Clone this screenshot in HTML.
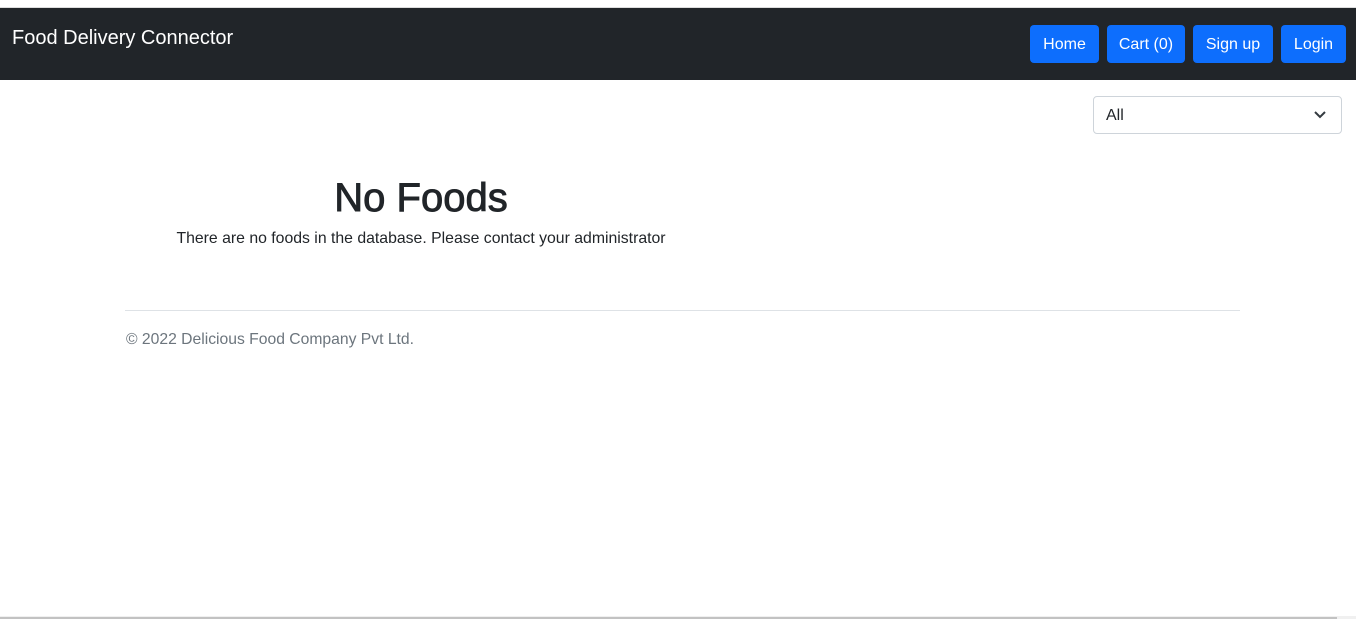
<!DOCTYPE html>
<html><head><meta charset="utf-8"><style>
*{box-sizing:border-box;margin:0;padding:0}
body{width:1356px;height:619px;overflow:hidden;background:#fff;font-family:"Segoe UI","Liberation Sans",sans-serif;color:#212529;position:relative}
.top{position:absolute;top:0;left:0;right:0;height:8px;background:#fff;border-bottom:1px solid #ddd}
nav{position:absolute;top:8px;left:0;width:1356px;height:72px;background:#212529}
.brand{position:absolute;left:12px;top:19px;color:#fff;font-size:20px}
.btn{position:absolute;top:17px;height:38px;background:#0d6efd;color:#fff;border-radius:4px;font-size:16px;line-height:40px;text-align:center}
.sel{position:absolute;left:1093px;top:96px;width:249px;height:38px;border:1px solid #ced4da;border-radius:4px;font-size:16px;line-height:38px;padding-left:12px}
.sel svg{position:absolute;right:14px;top:13px}
h1{position:absolute;left:0;width:842px;text-align:center;top:172px;font-size:40px;font-weight:400;line-height:52px;-webkit-text-stroke:0.9px #212529}
.msg{position:absolute;left:0;width:842px;text-align:center;top:228px;font-size:15.8px;line-height:22px}
hr{position:absolute;left:125px;width:1115px;top:310px;border:0;border-top:1px solid #dee2e6}
.foot{position:absolute;left:126px;top:329px;font-size:15.7px;color:#6c757d;line-height:22px}
.sb{position:absolute;left:0;right:0;bottom:0;height:3px;background:#f0f0f0}
.sb div{position:absolute;left:0;width:1337px;top:1px;height:2px;background:#c2c2c2}
</style></head><body>
<div class="top"></div>
<nav>
<div class="brand">Food Delivery Connector</div>
<div class="btn" style="left:1030px;width:69px">Home</div>
<div class="btn" style="left:1107px;width:78px">Cart (0)</div>
<div class="btn" style="left:1193px;width:80px">Sign up</div>
<div class="btn" style="left:1281px;width:65px">Login</div>
</nav>
<div class="sel">All<svg width="14" height="10" viewBox="0 0 14 10"><path d="M2 2l5 5 5-5" fill="none" stroke="#343a40" stroke-width="2"/></svg></div>
<h1>No Foods</h1>
<div class="msg">There are no foods in the database. Please contact your administrator</div>
<hr>
<div class="foot">© 2022 Delicious Food Company Pvt Ltd.</div>
<div class="sb"><div></div></div>
</body></html>
